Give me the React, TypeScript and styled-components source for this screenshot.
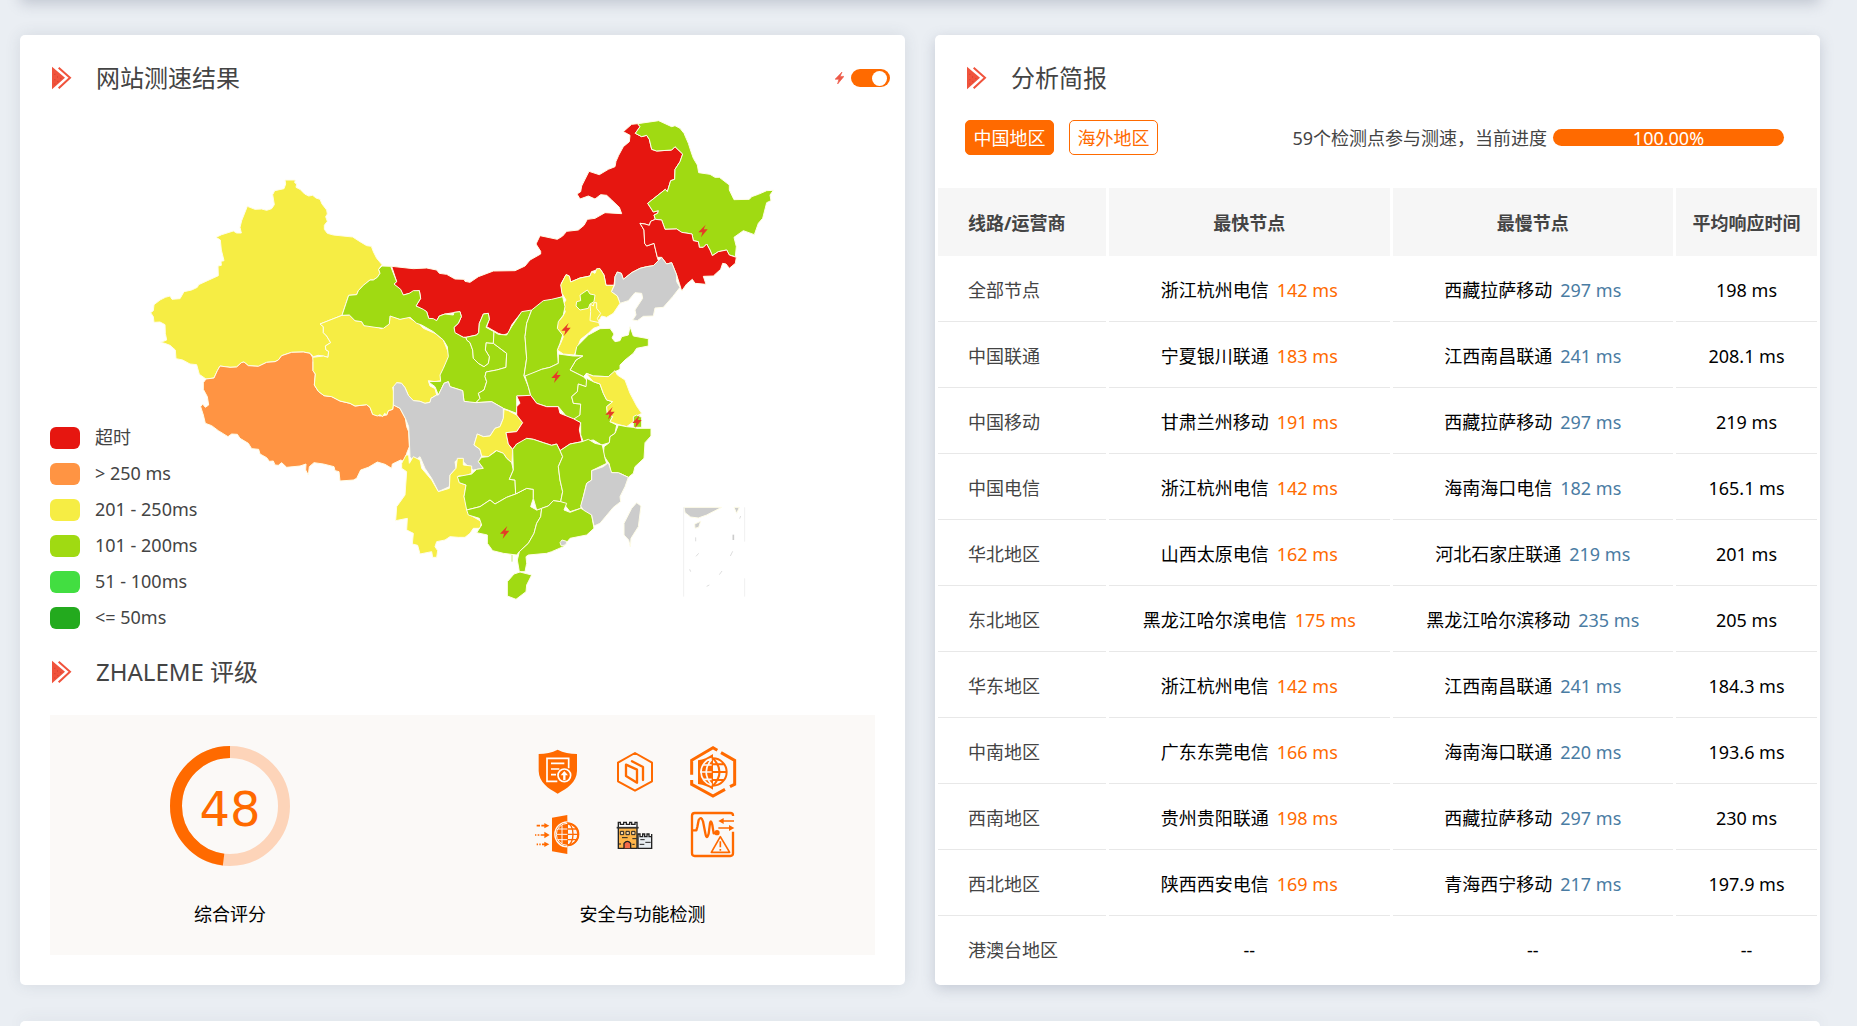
import React, { useState } from "react";
import styled, { createGlobalStyle } from "styled-components";

const ORANGE = "#ff6a00";

const GlobalStyle = createGlobalStyle`
  *, *::before, *::after { box-sizing: border-box; }
  body {
    margin: 0;
    background: #eaeef3;
    color: #444;
    font-family: "Noto Sans", "Noto Sans CJK SC", sans-serif;
    font-size: 18px;
    line-height: 24px;
  }
`;

const Page = styled.main`
  display: flex;
  flex-direction: column;
  min-height: 100vh;
  padding: 0 37px 0 20px;
  overflow: hidden;
`;

const PreviousCard = styled.div`
  height: 20px;
  margin-top: -20px;
  border-radius: 5px;
  box-shadow: 0 4px 14px rgba(110, 118, 140, 0.32);
`;

const NextCard = styled.div`
  flex: 1;
  min-height: 5px;
  border-radius: 5px 5px 0 0;
  background: #fff;
  box-shadow: 0 0 16px rgba(60, 70, 90, 0.12);
`;

const Columns = styled.div`
  display: grid;
  grid-template-columns: repeat(2, minmax(0, 1fr));
  gap: 30px;
  margin: 35px 0 36px;
`;

const Card = styled.section<{ $raised?: boolean }>`
  display: flex;
  flex-direction: column;
  border-radius: 5px;
  background: #fff;
  box-shadow: ${(p) =>
    p.$raised ? "0 4px 14px rgba(100, 110, 135, 0.28)" : "0 0 16px rgba(60, 70, 90, 0.12)"};
`;

const CardHeader = styled.header`
  display: flex;
  align-items: center;
  height: 36px;
  margin-top: 25px;
  padding: 0 15px 0 30px;
`;

const Title = styled.h2`
  flex: 1;
  margin: 0 0 0 24px;
  font-size: 24px;
  line-height: 36px;
  font-weight: 400;
`;

const SwitchLabel = styled.label`
  display: flex;
  align-items: center;
  gap: 7px;
`;

const Switch = styled.input`
  appearance: none;
  display: flex;
  align-items: center;
  justify-content: flex-end;
  width: 39px;
  height: 18px;
  margin: 0;
  padding: 0 3px;
  border-radius: 9px;
  background: #ccc;
  cursor: pointer;
  &:not(:checked) { justify-content: flex-start; }
  &:checked { background: ${ORANGE}; }
  &::before {
    content: "";
    width: 15px;
    height: 15px;
    border-radius: 50%;
    background: #fff;
  }
`;

const MapStage = styled.div`
  display: grid;
  height: 514px;
  margin: 19px 30px 0;
  & > * { grid-area: 1 / 1; }
`;

const MapSvg = styled.svg`
  width: 640px;
  max-width: 100%;
  height: 490px;
  margin-left: 90px;
`;

const Legend = styled.ul`
  display: flex;
  flex-direction: column;
  gap: 14px;
  align-self: end;
  justify-self: start;
  margin: 0;
  padding: 0;
  list-style: none;
`;

const LegendItem = styled.li<{ $color: string }>`
  display: flex;
  align-items: flex-start;
  gap: 15px;
  height: 22px;
  line-height: 20px;
  &::before {
    content: "";
    width: 30px;
    height: 22px;
    border-radius: 6px;
    background: ${(p) => p.$color};
  }
`;

const RatingPanel = styled.div`
  display: grid;
  grid-template-columns: 24fr 31fr;
  height: 240px;
  margin: 25px 30px 30px;
  background: #fbf9f7;
  color: #000;
`;

const RatingCell = styled.div`
  display: flex;
  flex-direction: column;
  align-items: center;
  justify-content: space-between;
  padding: 24px 0 29px;
`;

const Ring = styled.div`
  display: grid;
  place-items: center;
  width: 120px;
  height: 120px;
  margin-top: 7px;
  & > * { grid-area: 1 / 1; }
`;

const Score = styled.strong`
  padding-top: 6px;
  color: ${ORANGE};
  font-family: "DejaVu Sans", sans-serif;
  font-size: 48px;
  line-height: 56px;
  font-weight: 400;
`;

const IconGrid = styled.div`
  display: grid;
  grid-template-columns: repeat(3, 78px);
  grid-auto-rows: 64px;
  margin-right: 16px;
`;

const Toolbar = styled.div`
  display: flex;
  align-items: center;
  gap: 15px;
  height: 35px;
  margin: 24px 36px 33px 30px;
`;

const RegionButton = styled.button<{ $active: boolean }>`
  min-width: 89px;
  height: 35px;
  padding: 0 7px;
  border: 1px solid ${ORANGE};
  border-radius: 5px;
  background: ${(p) => (p.$active ? ORANGE : "#fff")};
  color: ${(p) => (p.$active ? "#fff" : ORANGE)};
  font: inherit;
  white-space: nowrap;
  cursor: pointer;
`;

const Progress = styled.div`
  display: flex;
  align-items: center;
  gap: 6px;
  margin-left: auto;
  white-space: nowrap;
`;

const ProgressBar = styled.div`
  width: 231px;
  height: 17px;
  border-radius: 9px;
  background: ${ORANGE};
  color: #fff;
  line-height: 18px;
  text-align: center;
`;

const Table = styled.table`
  width: 100%;
  table-layout: fixed;
  border-collapse: separate;
  border-spacing: 3px 0;
  margin-bottom: 3px;
`;

const Col = styled.col<{ $width?: number }>`
  width: ${(p) => (p.$width ? `${p.$width}px` : "auto")};
`;

const HeadCell = styled.th<{ $first?: boolean }>`
  height: 68px;
  padding: 2px 0 0 ${(p) => (p.$first ? 30 : 0)}px;
  background: #f6f6f6;
  font-weight: 700;
  text-align: ${(p) => (p.$first ? "left" : "center")};
`;

const Cell = styled.td`
  height: 66px;
  padding: 2px 0 0;
  color: #000;
  text-align: center;
  white-space: nowrap;
  border-bottom: 1px solid #e8e8e8;
  tr:last-child > & { border-bottom-color: transparent; }
`;

const RowName = styled.th`
  height: 66px;
  padding: 2px 0 0 30px;
  font-weight: 400;
  text-align: left;
  border-bottom: 1px solid #e8e8e8;
  tr:last-child > & { border-bottom-color: transparent; }
`;

const Latency = styled.span<{ $slow?: boolean }>`
  margin-left: 8px;
  color: ${(p) => (p.$slow ? "#4a7ca3" : ORANGE)};
`;

const TIMEOUT = "#e61610";
const OVER250 = "#ff9443";
const UNDER250 = "#f6ed44";
const UNDER200 = "#a0da12";
const NONE = "#ccc";

const legend = [
  { color: TIMEOUT, label: "超时" },
  { color: OVER250, label: "> 250 ms" },
  { color: UNDER250, label: "201 - 250ms" },
  { color: UNDER200, label: "101 - 200ms" },
  { color: "#42de41", label: "51 - 100ms" },
  { color: "#23aa1e", label: "<= 50ms" },
];

type Province = { fill: string; points: string };

const west: Province[] = [
  { fill: UNDER250, points: "435,60 466,60 464,68 470,72 468,82 480,88 494,102 506,108 518,106 528,114 540,118 546,132 560,150 562,162 557,170 562,184 553,196 553,208 562,220 580,225 638,231 660,245 680,257 694,259 700,275 710,295 726,314 716,328 720,340 712,352 700,360 690,360 670,376 655,392 650,404 626,406 618,430 606,466 540,492 550,500 550,518 560,528 572,548 556,558 558,570 566,574 564,592 550,588 535,586 520,590 510,580 490,576 455,577 425,587 415,600 405,605 380,607 355,619 325,617 312,606 304,608 290,621 270,622 240,618 232,632 222,654 198,657 178,643 170,614 150,612 128,600 108,596 106,570 90,556 74,550 62,547 80,540 76,520 75,494 60,486 42,487 40,470 32,458 40,452 42,434 60,420 76,412 90,408 96,418 120,416 132,395 155,390 172,382 176,374 235,347 234,318 244,316 243,304 252,302 244,270 241,240 228,232 245,224 280,213 290,219 304,219 300,202 305,182 322,139 345,148 365,147 380,151 395,146 403,134 398,104 404,92 432,86 437,72" },
  { fill: OVER250, points: "198,657 222,654 232,632 240,618 270,622 290,621 304,608 312,606 325,617 355,619 380,607 405,605 415,600 425,587 455,577 490,576 510,580 518,592 524,594 519,605 519,632 526,642 523,675 535,694 552,707 575,710 600,723 630,730 645,738 680,734 690,742 698,763 720,768 740,765 745,752 758,748 760,734 780,745 796,775 800,800 806,815 808,860 800,880 795,905 782,900 757,912 755,925 735,913 712,906 685,922 662,930 650,955 640,960 600,963 597,935 585,932 582,920 550,912 522,908 508,920 505,945 497,930 498,912 480,918 440,922 425,908 415,916 405,915 400,903 388,904 380,893 360,882 356,868 335,866 325,850 300,835 292,823 275,822 264,830 235,812 215,797 196,790 190,765 182,740 188,732 196,742 206,735 202,710 190,688 190,668" },
  { fill: UNDER250, points: "540,492 606,466 628,465 645,482 665,485 672,497 700,496 724,506 736,500 736,490 748,490 750,467 780,478 800,469 836,490 850,505 885,520 910,540 918,560 928,585 922,612 912,622 902,645 903,662 885,665 865,662 870,678 885,686 890,705 873,715 870,727 855,730 840,724 820,722 805,706 795,683 785,670 770,668 768,680 758,682 762,700 760,734 758,748 745,752 740,765 734,760 728,770 720,764 712,768 698,763 690,742 680,734 645,738 630,730 600,723 575,710 552,707 535,694 523,675 526,642 519,632 519,605 518,592 550,588 564,592 566,574 558,570 556,558 572,548 560,528 550,518 550,500" },
];

const northeast: Province[] = [
  { fill: TIMEOUT, points: "-265,799 -200,806 -160,804 -130,810 -122,820 -100,823 -75,837 -48,838 -45,844 -30,847 -5,830 40,813 105,812 135,798 150,780 182,762 182,754 168,732 180,707 232,718 248,708 260,694 295,690 312,676 322,658 345,655 375,638 425,641 418,622 395,600 380,586 362,584 345,597 325,588 300,597 291,582 302,575 305,558 327,514 358,524 385,508 405,500 408,484 416,466 430,440 448,425 450,406 430,395 455,373 473,371 480,380 466,400 485,410 500,406 508,418 515,448 530,453 575,450 585,440 608,462 600,485 585,508 584,538 572,542 562,575 556,568 503,610 520,636 535,632 533,640 522,645 526,658 512,664 508,676 495,672 480,670 492,690 494,730 500,738 522,730 532,772 535,782 520,797 500,800 480,805 455,818 430,838 424,820 412,816 405,830 402,856 378,856 372,825 360,806 335,815 330,828 300,834 272,846 268,828 258,824 244,850 246,870 248,890 225,898 195,905 185,925 155,935 125,938 110,955 95,975 85,1000 70,1005 55,1000 20,980 28,958 25,940 10,942 -2,970 -4,998 -10,1005 -42,1012 -50,1012 -78,998 -78,982 -65,970 -56,950 -60,935 -105,942 -122,948 -130,962 -154,955 -160,935 -192,918 -178,895 -182,872 -230,885 -258,852 -250,845" },
  { fill: UNDER200, points: "473,371 536,362 575,380 585,377 600,385 612,400 625,430 633,455 640,475 652,495 656,518 690,523 705,532 718,532 748,555 748,570 762,599 808,598 815,590 835,583 860,572 880,571 870,585 873,602 860,608 848,655 835,670 823,704 790,692 762,712 769,740 766,770 748,765 740,750 715,755 697,767 690,750 680,732 670,742 658,742 655,725 640,722 636,702 605,697 590,687 555,688 545,660 526,658 522,645 533,640 535,632 520,636 503,610 556,568 562,575 572,542 584,538 585,508 600,485 608,462 585,440 575,450 530,453 515,448 508,418 500,406 485,410 466,400 480,380" },
  { fill: TIMEOUT, points: "526,658 545,660 555,688 590,687 605,697 636,702 640,722 655,725 658,742 670,742 680,732 690,750 697,767 715,755 740,750 748,765 769,772 766,790 748,805 738,792 728,790 722,808 700,828 670,829 678,853 645,850 637,838 620,852 605,873 598,850 590,825 575,788 560,792 545,772 532,772 522,730 500,738 494,730 492,690 480,670 495,672 508,676 512,664" },
  { fill: NONE, points: "545,772 560,792 575,788 590,825 590,845 600,862 578,890 550,922 525,924 520,948 490,949 472,962 458,960 468,945 465,930 488,895 485,880 465,878 445,902 420,910 412,888 394,875 404,855 405,830 412,816 424,820 430,838 455,818 480,805 500,800 520,797 535,782" },
  { fill: UNDER250, points: "258,824 268,828 272,846 300,834 330,828 335,815 345,820 350,806 360,806 372,825 378,856 402,856 394,875 412,888 420,910 400,940 380,952 365,948 355,965 360,978 340,985 325,1000 302,1018 283,1065 250,1062 232,1050 242,1030 250,1010 232,985 230,970 248,950 256,935 248,915 258,900 246,880 242,855" },
  { fill: UNDER250, points: "330,912 340,918 342,908 350,908 350,925 362,940 352,955 358,968 330,962 332,935" },
  { fill: UNDER200, points: "322,870 330,882 345,885 342,905 330,912 325,925 300,930 288,918 290,905 302,902 300,885" },
];

const central: Province[] = [
  { fill: UNDER200, points: "-84,226 -72,190 -64,166 -40,164 -35,152 -20,136 0,120 10,120 22,112 30,100 26,88 36,78 62,79 80,125 72,132 92,148 100,165 118,160 130,152 148,152 152,175 138,198 160,208 170,215 176,235 190,236 200,242 208,228 225,222 250,225 252,217 270,215 274,230 265,250 252,262 255,278 280,292 288,292 290,300 300,308 308,330 310,355 325,370 342,380 355,370 358,350 346,330 348,308 370,310 390,325 410,340 408,382 380,390 348,396 345,410 350,425 342,450 325,460 330,475 318,488 300,488 282,484 278,452 240,440 235,425 222,430 215,445 205,465 195,440 175,425 212,424 210,405 220,385 235,350 232,320 220,300 190,275 155,255 140,250 120,232 90,238 60,228 58,252 40,265 15,262 -18,257 -25,245 -45,242 -62,225" },
  { fill: UNDER200, points: "288,292 320,285 326,278 328,250 340,222 355,220 358,238 348,262 372,275 370,310 348,308 346,330 358,350 355,370 342,380 325,370 310,355 308,330 300,308 290,300" },
  { fill: UNDER200, points: "485,210 470,250 465,290 470,355 462,408 475,440 482,466 440,468 440,520 400,505 365,485 318,488 330,475 325,460 342,450 350,425 345,410 348,396 380,390 408,382 410,340 370,310 372,275 385,283 410,285 425,260 455,215" },
  { fill: UNDER200, points: "578,170 585,200 580,225 565,245 562,265 578,285 570,310 562,330 565,370 540,382 515,388 470,410 462,408 470,355 465,290 470,250 485,210 520,182 545,178" },
  { fill: UNDER200, points: "690,266 720,265 732,282 726,294 735,305 750,302 755,290 775,285 780,260 790,288 835,296 835,318 800,325 790,340 765,360 750,375 750,388 735,395 715,410 670,408 650,400 640,410 600,390 618,360 638,348 615,345 620,320 655,285" },
  { fill: UNDER200, points: "565,342 610,348 638,348 618,360 600,390 640,410 655,425 648,440 625,432 622,455 605,470 610,490 632,492 630,530 610,538 590,530 565,500 530,500 500,490 482,466 475,440 465,408 515,388 540,382 565,370" },
  { fill: UNDER200, points: "650,415 670,425 690,432 700,460 710,480 728,485 710,500 712,520 728,530 720,545 740,555 735,580 720,590 718,608 695,615 670,600 640,605 632,585 632,548 610,538 630,525 632,492 610,490 605,470 622,455 625,432 648,440" },
  { fill: UNDER250, points: "648,400 670,408 715,410 735,392 742,405 765,420 780,460 800,498 815,520 800,528 790,545 770,560 740,552 720,545 728,530 712,520 710,500 728,485 710,480 700,460 690,432 670,425" },
  { fill: UNDER200, points: "745,555 770,560 790,562 800,565 843,565 843,588 825,608 822,655 795,680 790,700 775,712 750,700 722,698 718,672 700,645 702,620 718,608 720,590 735,580" },
  { fill: UNDER200, points: "790,530 800,525 815,532 815,562 790,562" },
  { fill: NONE, points: "70,495 70,440 80,428 95,430 105,443 115,466 130,482 150,484 165,490 180,487 183,475 200,465 205,465 215,445 222,430 235,425 240,440 278,452 282,484 318,488 365,485 400,505 400,535 390,560 375,565 360,588 340,590 322,582 312,615 330,628 335,648 325,665 340,685 310,690 290,675 270,655 255,665 258,685 240,705 238,740 205,755 185,715 165,685 150,650 130,665 120,650 118,600 116,560 106,535 90,505" },
  { fill: UNDER250, points: "402,508 415,512 440,525 458,548 440,575 408,578 415,612 428,628 426,668 410,655 400,640 378,632 355,650 335,648 330,628 312,615 322,582 340,590 360,588 375,565 390,560 400,535" },
  { fill: TIMEOUT, points: "440,468 482,466 500,490 530,500 565,500 570,520 610,536 632,548 628,570 636,605 600,612 570,632 560,612 545,616 520,608 490,598 470,595 460,608 440,612 428,628 415,612 408,578 440,575 458,548 440,525 440,500 450,490" },
];

const south: Province[] = [
  { fill: UNDER250, points: "108,165 116,165 118,190 130,170 150,180 155,205 185,240 205,275 238,265 240,225 258,205 262,175 280,175 280,195 305,198 305,220 285,228 265,228 268,248 288,255 282,290 295,325 300,345 335,365 330,385 310,385 300,400 285,412 265,412 240,410 225,420 200,425 195,440 203,452 200,472 188,472 185,455 150,462 143,436 127,432 130,400 110,390 112,355 77,362 80,320 105,285 110,215 95,205 95,190" },
  { fill: UNDER200, points: "380,152 400,160 410,175 425,188 430,210 418,238 435,240 437,282 410,292 375,312 360,300 330,320 290,330 282,290 288,255 268,248 262,230 305,222 320,208 340,205 325,185 335,172 355,170" },
  { fill: UNDER200, points: "290,330 330,320 360,300 375,312 410,292 437,282 470,265 490,268 490,295 482,320 500,330 515,325 512,350 500,370 492,400 475,430 448,455 440,465 400,460 368,452 352,430 352,405 320,398 335,375 328,355 295,345" },
  { fill: UNDER200, points: "428,148 440,132 470,115 490,118 520,128 545,136 560,132 570,152 578,170 565,200 570,240 578,275 572,305 550,302 535,318 515,325 500,330 490,295 490,268 470,265 437,282 435,240 418,238 430,210" },
  { fill: UNDER200, points: "570,152 600,132 636,125 655,118 675,130 697,135 705,175 710,190 665,212 665,240 650,250 640,290 632,325 600,335 580,310 572,305 578,275 570,240 565,200 578,170" },
  { fill: UNDER200, points: "515,325 535,318 550,302 572,305 590,310 582,330 600,337 632,325 655,335 665,345 672,385 650,405 600,415 580,440 545,455 530,460 475,465 468,470 470,490 465,515 448,515 442,480 448,455 475,430 492,400 500,370 512,350" },
  { fill: NONE, points: "715,188 725,218 745,218 775,232 765,260 750,290 752,305 730,322 690,370 672,378 665,345 640,330 632,318 640,290 650,250 665,240 665,212 700,200" },
  { fill: UNDER200, points: "432,522 450,516 485,525 470,555 468,575 438,598 412,588 412,545" },
  { fill: NONE, points: "800,308 813,318 805,380 783,415 781,440 776,420 762,405 762,370 785,325" },
  { fill: NONE, points: "570,428 576,420 590,424 588,434 574,438" },
  { fill: NONE, points: "942,322 1055,322 1010,345 985,354 962,351 945,338" },
  { fill: NONE, points: "974,372 992,364 986,382 975,385" },
  { fill: NONE, points: "1092,322 1108,322 1100,340" },
];

const BOLT = "M8-19-14 4H-2L-6 19 14-5H2Z";

const bolts = [
  [2109, 693],
  [1698, 988],
  [1668, 1130],
  [1830, 1240],
  [1911, 1265],
  [1514, 1597],
];

const regions = [
  { x: 420, y: 480, list: west },
  { x: 1440, y: 0, list: northeast },
  { x: 1110, y: 720, list: central },
  { x: 1110, y: 1200, list: south },
];

function ChinaMap({ showBolts }: { showBolts: boolean }) {
  return (
    <MapSvg viewBox="420 345 1920 1470" role="img" aria-label="网站测速结果">
      {regions.map((region) => (
        <g key={`${region.x}-${region.y}`} transform={`translate(${region.x} ${region.y})`}>
          {region.list.map((p) => (
            <polygon key={p.points} points={p.points} fill={p.fill} stroke="#fffde8" strokeWidth="3" strokeLinejoin="round" />
          ))}
        </g>
      ))}
      <g transform="translate(1110 1200)" fill="none" stroke="#ccc" strokeWidth="3">
        <path d="M941 322V590M1124 322V425M1124 535V590" stroke="#f0f0f0" />
        <path d="M1090 404V420" strokeWidth="5" />
        <path d="M1112 348l-3 8M1088 454l-7 14M1056 513l-8 11M986 460l-8 9M959 508l3 7M1018 555l-8 4M977 412v12" strokeWidth="2" />
        <path d="M426 465V485" stroke="#c8e87a" />
      </g>
      {showBolts &&
        bolts.map(([x, y]) => (
          <path key={`${x}-${y}`} d={BOLT} transform={`translate(${x} ${y})`} fill="#e53b27" />
        ))}
    </MapSvg>
  );
}

function TitleMark() {
  return (
    <svg width="22" height="24" viewBox="0 0 66 72" aria-hidden="true">
      <path d="M6 2 45 35 6 70Z" fill="#f0533c" />
      <path d="M26 5 60 35 26 67" fill="none" stroke="#f0533c" strokeWidth="6" />
      <path d="M13 25h3M21 33h3M13 41h3M22 47h3M13 54h3M31 38h3" stroke="#cf3d2c" strokeWidth="3" />
    </svg>
  );
}

function BoltIcon() {
  return (
    <svg width="9" height="12" viewBox="-14 -19 28 38" aria-hidden="true">
      <path d={BOLT} fill="#ee5a48" stroke="#ee5a48" strokeWidth="2" />
    </svg>
  );
}

function ShieldIcon() {
  return (
    <svg viewBox="54 57 234 192" aria-hidden="true">
      <path d="M173 89C155 98 137 101 116 102V153C117 187 144 205 173 221 202 205 230 187 231 153V102C210 101 190 98 173 89Z" fill={ORANGE} />
      <g fill="none" stroke="#fff" strokeWidth="5">
        <path d="M172 184H141V115H206V145M153 130H193M153 147H178M153 164H168" />
        <circle cx="193" cy="166" r="19" fill={ORANGE} />
        <path d="M193 180V162" strokeWidth="7" />
      </g>
      <path d="M182 166 193 153 204 166Z" fill="#fff" />
    </svg>
  );
}

function HexagonIcon() {
  return (
    <svg viewBox="288 57 234 192" aria-hidden="true">
      <g fill="none" stroke={ORANGE} strokeWidth="6" strokeLinejoin="round" strokeLinecap="round">
        <path d="M405 99 456 128V184L405 212 354 184V128Z" />
        <path d="M378 134 411 149V188L378 168ZM396 124 429 141V180" strokeWidth="7" />
      </g>
    </svg>
  );
}

function GlobeHexIcon() {
  return (
    <svg viewBox="522 57 234 192" aria-hidden="true">
      <g fill="none" stroke={ORANGE}>
        <path d="M652 91 639 83 575 121V164M575 180V193L639 228 675 208M690 200 704 193V121L663 98" strokeWidth="9" />
        <path d="M639 115A41 41 0 0 1 639 197M639 115Q678 156 639 197M639 156H680M639 133H671M639 180H671" strokeWidth="6" />
      </g>
      <path d="M639 102C624 112 610 119 594 121V192C611 194 625 200 639 209Z" fill={ORANGE} />
      <path d="M635 116A41 41 0 0 0 635 196M635 118Q602 156 635 194M600 156H635M608 135H635M608 178H635" fill="none" stroke="#fbf9f7" strokeWidth="5" />
    </svg>
  );
}

function GatewayIcon() {
  return (
    <svg viewBox="54 249 234 192" aria-hidden="true">
      <path d="M156 293 202 285V402L156 394Z" fill={ORANGE} />
      <path d="M202 306A36 36 0 0 0 202 380" fill={ORANGE} stroke="#fbf9f7" strokeWidth="5" />
      <g fill="none" stroke={ORANGE} strokeWidth="4">
        <circle cx="202" cy="343" r="33" />
        <path d="M202 310A33 33 0 0 1 202 376" strokeWidth="6" />
        <ellipse cx="202" cy="343" rx="17" ry="33" />
        <path d="M169 343H235M174 327H230M174 359H230M202 310V376" />
        <path d="M110 317H120M124 317H136M105 345H109M113 345H118M122 345H136M110 373H114M118 373H122M126 373H136" strokeWidth="5" />
      </g>
      <path d="M202 310A33 33 0 0 0 202 376M170 343H202M174 327H202M174 359H202M186 316V370" fill="none" stroke="#fbf9f7" strokeWidth="3" />
      <path d="M133 309 148 317 133 325ZM133 335 149 345 133 355ZM133 365 148 373 133 381Z" fill={ORANGE} />
    </svg>
  );
}

function CastleIcon() {
  return (
    <svg viewBox="288 249 234 192" aria-hidden="true">
      <path d="M355 307H361V313H371V307H379V313H389V307H395V313H405V307H411V323H355Z" fill="#fff" stroke="#222" strokeWidth="4" />
      <path d="M355 323H411V385H355Z" fill="#ffb64a" stroke="#222" strokeWidth="4" />
      <path d="M350 323H416" stroke="#333" strokeWidth="5" />
      <path d="M361 334H371V344H361ZM378 334H388V344H378ZM395 334H405V344H395Z" fill="#f8d6a5" stroke="#222" strokeWidth="3" />
      <path d="M372 385V370Q382 358 392 370V385" fill="#f46b48" stroke="#222" strokeWidth="4" />
      <path d="M414 342H420V350H428V342H434V350H441V342H447V350H455V342V385H414Z" fill="#e8edf1" stroke="#222" strokeWidth="4" />
      <path d="M366 353H383M397 356H410M356 372H363M397 373H404M421 359H434M436 367H452M419 373H433" stroke="#222" strokeWidth="3" />
    </svg>
  );
}

function MonitorIcon() {
  return (
    <svg viewBox="522 249 234 192" aria-hidden="true">
      <g fill="none" stroke={ORANGE} strokeWidth="7" strokeLinejoin="round">
        <path d="M699 288V286Q699 279 691 279H584Q576 279 576 287V400Q576 408 584 408H691Q699 408 699 400V335" />
        <path d="M576 331H589L592 321 596 300Q603 287 609 304L616 340Q620 362 626 341L630 310Q633 297 637 315L641 340 650 338" />
        <path d="M665 303H702M655 324H692" strokeWidth="5" />
        <path d="M661 350 634 397H689Z" strokeWidth="5" />
        <path d="M661 364V382M661 387V392" strokeWidth="5" />
      </g>
      <circle cx="651" cy="338" r="8" fill={ORANGE} />
      <path d="M671 294 655 303 671 312ZM687 315 703 324 687 333Z" fill={ORANGE} />
    </svg>
  );
}

function ScoreRing({ value }: { value: number }) {
  const length = 2 * Math.PI * 54;
  return (
    <Ring>
      <svg width="120" height="120" viewBox="0 0 120 120" aria-hidden="true">
        <circle cx="60" cy="60" r="54" fill="none" stroke="#fdd4b9" strokeWidth="12" />
        <circle
          cx="60"
          cy="60"
          r="54"
          fill="none"
          stroke={ORANGE}
          strokeWidth="12"
          strokeDasharray={`${(length * value) / 100} ${length}`}
          transform="matrix(0 -1 -1 0 120 120)"
        />
      </svg>
      <Score>{value}</Score>
    </Ring>
  );
}

type Node = [string, number] | null;
type Row = { name: string; fast: Node; slow: Node; avg: string };

const rows: Row[] = [
  { name: "全部节点", fast: ["浙江杭州电信", 142], slow: ["西藏拉萨移动", 297], avg: "198 ms" },
  { name: "中国联通", fast: ["宁夏银川联通", 183], slow: ["江西南昌联通", 241], avg: "208.1 ms" },
  { name: "中国移动", fast: ["甘肃兰州移动", 191], slow: ["西藏拉萨移动", 297], avg: "219 ms" },
  { name: "中国电信", fast: ["浙江杭州电信", 142], slow: ["海南海口电信", 182], avg: "165.1 ms" },
  { name: "华北地区", fast: ["山西太原电信", 162], slow: ["河北石家庄联通", 219], avg: "201 ms" },
  { name: "东北地区", fast: ["黑龙江哈尔滨电信", 175], slow: ["黑龙江哈尔滨移动", 235], avg: "205 ms" },
  { name: "华东地区", fast: ["浙江杭州电信", 142], slow: ["江西南昌联通", 241], avg: "184.3 ms" },
  { name: "中南地区", fast: ["广东东莞电信", 166], slow: ["海南海口联通", 220], avg: "193.6 ms" },
  { name: "西南地区", fast: ["贵州贵阳联通", 198], slow: ["西藏拉萨移动", 297], avg: "230 ms" },
  { name: "西北地区", fast: ["陕西西安电信", 169], slow: ["青海西宁移动", 217], avg: "197.9 ms" },
  { name: "港澳台地区", fast: null, slow: null, avg: "--" },
];

function NodeCell({ node, slow }: { node: Node; slow?: boolean }) {
  return (
    <Cell>
      {node ? (
        <>
          {node[0]}
          <Latency $slow={slow}>{node[1]} ms</Latency>
        </>
      ) : (
        "--"
      )}
    </Cell>
  );
}

export default function App() {
  const [showBolts, setShowBolts] = useState(true);
  const [region, setRegion] = useState("中国地区");

  return (
    <>
      <GlobalStyle />
      <Page>
        <PreviousCard />
        <Columns>
          <Card>
            <CardHeader>
              <TitleMark />
              <Title>网站测速结果</Title>
              <SwitchLabel>
                <BoltIcon />
                <Switch
                  type="checkbox"
                  aria-label="闪电标记"
                  checked={showBolts}
                  onChange={(e) => setShowBolts(e.target.checked)}
                />
              </SwitchLabel>
            </CardHeader>
            <MapStage>
              <ChinaMap showBolts={showBolts} />
              <Legend>
                {legend.map((item) => (
                  <LegendItem key={item.label} $color={item.color}>
                    {item.label}
                  </LegendItem>
                ))}
              </Legend>
            </MapStage>
            <CardHeader>
              <TitleMark />
              <Title>ZHALEME 评级</Title>
            </CardHeader>
            <RatingPanel>
              <RatingCell>
                <ScoreRing value={48} />
                <span>综合评分</span>
              </RatingCell>
              <RatingCell>
                <IconGrid>
                  <ShieldIcon />
                  <HexagonIcon />
                  <GlobeHexIcon />
                  <GatewayIcon />
                  <CastleIcon />
                  <MonitorIcon />
                </IconGrid>
                <span>安全与功能检测</span>
              </RatingCell>
            </RatingPanel>
          </Card>

          <Card $raised>
            <CardHeader>
              <TitleMark />
              <Title>分析简报</Title>
            </CardHeader>
            <Toolbar>
              {["中国地区", "海外地区"].map((name) => (
                <RegionButton key={name} type="button" $active={region === name} onClick={() => setRegion(name)}>
                  {name}
                </RegionButton>
              ))}
              <Progress>
                <span>59个检测点参与测速，当前进度</span>
                <ProgressBar role="progressbar" aria-label="当前进度" aria-valuenow={100} aria-valuemin={0} aria-valuemax={100}>
                  100.00%
                </ProgressBar>
              </Progress>
            </Toolbar>
            <Table>
              <colgroup>
                <Col $width={168} />
                <Col />
                <Col />
                <Col $width={141} />
              </colgroup>
              <thead>
                <tr>
                  <HeadCell scope="col" $first>线路/运营商</HeadCell>
                  <HeadCell scope="col">最快节点</HeadCell>
                  <HeadCell scope="col">最慢节点</HeadCell>
                  <HeadCell scope="col">平均响应时间</HeadCell>
                </tr>
              </thead>
              <tbody>
                {rows.map((row) => (
                  <tr key={row.name}>
                    <RowName scope="row">{row.name}</RowName>
                    <NodeCell node={row.fast} />
                    <NodeCell node={row.slow} slow />
                    <Cell>{row.avg}</Cell>
                  </tr>
                ))}
              </tbody>
            </Table>
          </Card>
        </Columns>
        <NextCard />
      </Page>
    </>
  );
}
